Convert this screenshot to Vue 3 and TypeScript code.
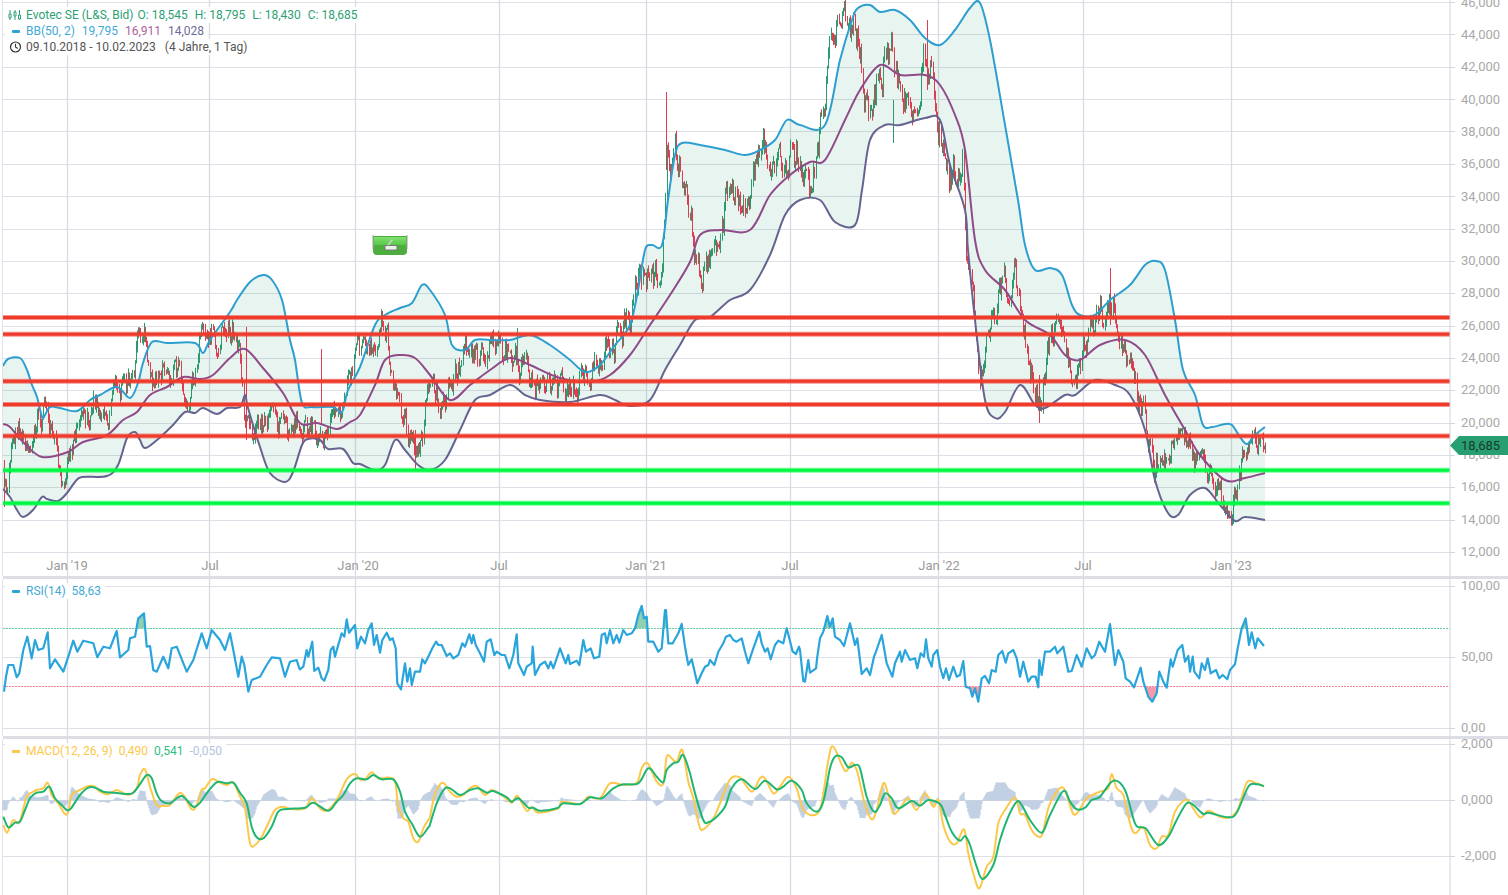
<template>
  <div class="chart">
    <section class="pane pane-price">
      <svg class="plot" viewBox="0 0 1508 576" width="1508" height="576">
        <defs>
          <clipPath id="price-clip"><rect x="3" y="0" width="1447" height="576" /></clipPath>
          <linearGradient id="btn-top" x1="0" y1="0" x2="0" y2="1">
            <stop offset="0" stop-color="#7fe06c" />
            <stop offset="1" stop-color="#58c94a" />
          </linearGradient>
        </defs>
        <g class="grid">
          <line v-for="y in priceGrid" :key="y" x1="3" x2="1450" :y1="y" :y2="y" />
        </g>
        <g class="grid-v">
          <line v-for="x in monthX" :key="x" :x1="x" :x2="x" y1="0" y2="576" />
        </g>
        <line class="edge" x1="2.5" x2="2.5" y1="0" y2="576" />
        <path class="band" :d="bandPath" />
        <g clip-path="url(#price-clip)">
          <path class="candle-up" :d="candles.up" />
          <path class="candle-down" :d="candles.down" />
          <path class="bb-mid" :d="midPath" />
          <path class="bb-low" :d="lowerPath" />
          <path class="bb-up" :d="upperPath" />
        </g>
        <g v-for="y in redLevels" :key="y">
          <line class="lvl-red-soft" x1="3" x2="1450" :y1="y" :y2="y" />
          <line class="lvl-red" x1="3" x2="1450" :y1="y" :y2="y" />
        </g>
        <g v-for="y in greenLevels" :key="y">
          <line class="lvl-green-soft" x1="3" x2="1450" :y1="y" :y2="y" />
          <line class="lvl-green" x1="3" x2="1450" :y1="y" :y2="y" />
        </g>
        <!-- Handelsmarke -->
        <g>
          <path d="M373 236h34v15q0 4-4 4h-26q-4 0-4-4z" fill="#4dae3f" />
          <path d="M374 237h32v8h-32z" fill="url(#btn-top)" />
          <path d="M373 235v14M407 235v14" stroke="#9aa49a" stroke-width="1" />
          <rect x="385" y="245.5" width="12" height="4.5" fill="#eef2ee" stroke="#777" stroke-width="1" />
          <path d="M388 245l4.500-5.500" stroke="#c9d2c9" stroke-width="1.600" />
        </g>
        <line class="axis" x1="1450" x2="1450" y1="0" y2="576" />
        <g v-for="t in priceTicks" :key="t.label">
          <line class="axis" x1="1450" x2="1455" :y1="t.y + 0.5" :y2="t.y + 0.5" />
          <text class="axis-label" x="1461" :y="t.labelY + 4.500">{{ t.label }}</text>
        </g>
        <text v-for="t in monthTicks" :key="t.x" class="month" :x="t.x" y="569.500" text-anchor="middle">{{ t.label }}</text>
      </svg>

      <div class="legend legend-price">
        <div class="row up">
          <svg class="ico" width="21" height="16" viewBox="0 0 21 16">
            <path d="M5 3v10M10 3v10M14.500 3v10" stroke="#2d9f74" stroke-width="1" fill="none" />
            <path d="M4 7h2v4h-2zM9 5h2v4h-2zM13.500 8h2v4h-2z" fill="#fff" stroke="#2d9f74" stroke-width="1" />
          </svg>
          <span class="name">Evotec SE (L&amp;S, Bid)</span><span>O: 18,545</span><span>H: 18,795</span><span>L: 18,430</span><span>C: 18,685</span>
        </div>
        <div class="row row-bb">
          <i class="dash dash-bb"></i>
          <span class="bb">BB(50, 2)</span><span class="bb">19,795</span><span class="bb-m">16,911</span><span class="bb-l">14,028</span>
        </div>
        <div class="row muted">
          <svg class="ico" width="21" height="16" viewBox="0 0 21 16">
            <circle cx="10.500" cy="8" r="5" fill="none" stroke="#333" stroke-width="1.200" />
            <path d="M10.500 4.800V8l2.200 1.500" fill="none" stroke="#333" stroke-width="1.100" />
          </svg>
          <span>09.10.2018 - 10.02.2023</span><span class="range">(4 Jahre, 1 Tag)</span>
        </div>
      </div>

      <div class="last-price">18,685</div>
    </section>

    <div class="sep"></div>

    <section class="pane pane-rsi">
      <svg class="plot" viewBox="0 579 1508 157" width="1508" height="157">
        <defs>
          <clipPath id="rsi-over"><rect x="0" y="579" width="1450" height="49.500" /></clipPath>
          <clipPath id="rsi-under"><rect x="0" y="686.500" width="1450" height="50" /></clipPath>
        </defs>
        <g class="grid">
          <line v-for="t in rsiTicks" :key="t.y" x1="3" x2="1450" :y1="t.y" :y2="t.y" />
        </g>
        <g class="grid-v">
          <line v-for="x in monthX" :key="x" :x1="x" :x2="x" y1="579" y2="736" />
        </g>
        <line class="edge" x1="2.500" x2="2.500" y1="579" y2="736" />
        <path class="rsi-fill-up" :d="rsiHigh" clip-path="url(#rsi-over)" />
        <path class="rsi-fill-down" :d="rsiLow" clip-path="url(#rsi-under)" />
        <line class="dots-green" x1="3" x2="1450" y1="628.500" y2="628.500" />
        <line class="dots-red" x1="3" x2="1450" y1="686.500" y2="686.500" />
        <path class="rsi" :d="rsiPath" />
        <line class="axis" x1="1450" x2="1450" y1="579" y2="736" />
        <g v-for="t in rsiTicks" :key="t.label">
          <line class="axis" x1="1450" x2="1455" :y1="t.y" :y2="t.y" />
          <text class="axis-label" x="1461" :y="t.y + 3.500">{{ t.label }}</text>
        </g>
      </svg>
      <div class="legend legend-low">
        <div class="row">
          <i class="dash dash-rsi"></i>
          <span class="bb">RSI(14)</span><span class="bb">58,63</span>
        </div>
      </div>
    </section>

    <div class="sep"></div>

    <section class="pane pane-macd">
      <svg class="plot" viewBox="0 739 1508 156" width="1508" height="156">
        <g class="grid">
          <line v-for="t in macdTicks" :key="t.y" x1="3" x2="1450" :y1="t.y" :y2="t.y" />
        </g>
        <g class="grid-v">
          <line v-for="x in monthX" :key="x" :x1="x" :x2="x" y1="739" y2="895" />
        </g>
        <line class="edge" x1="2.500" x2="2.500" y1="739" y2="895" />
        <path class="hist" :d="histPath" />
        <path class="macd-y" :d="macdPath" />
        <path class="macd-g" :d="signalPath" />
        <line class="axis" x1="1450" x2="1450" y1="739" y2="895" />
        <g v-for="t in macdTicks" :key="t.label">
          <line class="axis" x1="1450" x2="1455" :y1="t.y" :y2="t.y" />
          <text class="axis-label" x="1461" :y="t.y + 3.500">{{ t.label }}</text>
        </g>
      </svg>
      <div class="legend legend-low">
        <div class="row">
          <i class="dash dash-macd"></i>
          <span class="m-y">MACD(12, 26, 9)</span><span class="m-y">0,490</span><span class="m-g">0,541</span><span class="m-h">-0,050</span>
        </div>
      </div>
    </section>
  </div>
</template>

<script setup lang="ts">
type Pt = [number, number]

// Kurse in Pixeln, von Hand aus dem Chart abgelesen (x, y, x, y, ...)
function pairs(flat: number[]): Pt[] {
  const out: Pt[] = []
  for (let i = 0; i < flat.length; i += 2) out.push([flat[i], flat[i + 1]])
  return out
}
// Abschnitte wurden in 3x-Vergrößerung gemessen
function seg(x0: number, y0: number, flat: number[]): Pt[] {
  return pairs(flat).map(([x, y]) => [x0 + x / 3, y0 + y / 3] as Pt)
}

function lineD(pts: Pt[]): string {
  return 'M' + pts.map((p) => p[0].toFixed(1) + ' ' + p[1].toFixed(1)).join('L')
}
function smoothD(pts: Pt[]): string {
  let d = 'M' + pts[0][0].toFixed(1) + ' ' + pts[0][1].toFixed(1)
  for (let i = 0; i < pts.length - 1; i++) {
    const a = pts[Math.max(i - 1, 0)]
    const b = pts[i]
    const c = pts[i + 1]
    const e = pts[Math.min(i + 2, pts.length - 1)]
    d += 'C' + (b[0] + (c[0] - a[0]) / 6).toFixed(1) + ' ' + (b[1] + (c[1] - a[1]) / 6).toFixed(1)
    d += ' ' + (c[0] - (e[0] - b[0]) / 6).toFixed(1) + ' ' + (c[1] - (e[1] - b[1]) / 6).toFixed(1)
    d += ' ' + c[0].toFixed(1) + ' ' + c[1].toFixed(1)
  }
  return d
}
function at(pts: Pt[], x: number): number {
  if (x <= pts[0][0]) return pts[0][1]
  for (let i = 1; i < pts.length; i++) {
    if (x <= pts[i][0]) {
      const t = (x - pts[i - 1][0]) / (pts[i][0] - pts[i - 1][0] || 1)
      return pts[i - 1][1] + (pts[i][1] - pts[i - 1][1]) * t
    }
  }
  return pts[pts.length - 1][1]
}

const monthX = [67.5, 209.5, 355.5, 499.5, 646.5, 790.5, 938.5, 1083.5, 1231.5]
const monthTicks = [
  { x: 67, label: "Jan '19" }, { x: 210, label: 'Jul' }, { x: 358, label: "Jan '20" },
  { x: 499, label: 'Jul' }, { x: 646, label: "Jan '21" }, { x: 790, label: 'Jul' },
  { x: 939, label: "Jan '22" }, { x: 1083, label: 'Jul' }, { x: 1231, label: "Jan '23" },
]

const priceTicks = Array.from({ length: 18 }, (_, i) => ({
  y: Math.round(552 - i * 32.35),
  labelY: 551.3 - i * 32.3,
  label: 12 + i * 2 + ',000',
}))
const priceGrid = priceTicks.map((t) => t.y + 0.5)
const redLevels = [317.5, 334.2, 381.3, 404.4, 436]
const greenLevels = [470.3, 503.3]

const rsiTicks = [
  { y: 586.5, label: '100,00' },
  { y: 657.5, label: '50,00' },
  { y: 728.5, label: '0,00' },
]
const macdTicks = [
  { y: 744.5, label: '2,000' },
  { y: 800.5, label: '0,000' },
  { y: 856.5, label: '-2,000' },
]

const upper = pairs([
  3,366, 8,359, 20,358, 27,370, 32,385, 37,397, 42,417, 45,415, 50,407, 60,408, 77,411, 90,400, 100,395,
  117,387, 130,398, 138,383, 143,363, 152,342, 167,343, 195,343, 203,353, 210,340, 230,312, 237,300, 250,282,
  263,275, 272,280, 282,300, 290,340, 295,360, 302,403, 312,407, 333,407, 342,412, 348,390, 360,367,
  375,325, 385,315, 400,308, 412,303, 422,285, 430,290, 445,315, 452,345, 465,350, 475,340, 490,340, 510,340,
  530,335, 550,345, 570,360, 585,372, 600,365, 615,345, 630,325, 638,290, 645,250, 652,245, 662,245, 668,200,
  675,155, 682,143, 700,145, 725,150, 745,155, 760,150, 775,140, 787,120, 800,125, 825,125, 840,60, 852,20,
  858,8, 870,5, 880,12, 895,10, 910,20, 925,38, 940,45, 955,30, 970,8, 980,3, 990,40, 1005,125, 1018,200,
  1025,245, 1035,270, 1050,268, 1062,275, 1072,305, 1080,315, 1095,315, 1110,300, 1130,285, 1145,265, 1156,261,
  1165,270, 1175,320, 1183,370, 1195,395, 1203,425, 1212,427, 1225,424, 1232,425, 1240,437, 1247,444, 1255,435, 1265,427,
])
const lower = pairs([
  3,489, 10,497, 17,510, 23,517, 33,510, 42,497, 47,499, 58,501, 67,493, 75,482, 82,477, 107,476, 118,465, 127,438,
  135,432, 140,440, 145,448, 157,440, 173,425, 185,412, 195,413, 203,408, 217,414, 227,408, 240,407, 245,395,
  248,408, 260,447, 270,473, 285,482, 293,472, 302,445, 308,439, 320,440, 328,449, 343,449, 353,463, 360,464,
  375,470, 385,465, 395,440, 405,450, 418,465, 430,470, 445,460, 460,430, 475,400, 490,395, 510,385, 525,395,
  540,400, 570,402, 600,395, 615,400, 630,406, 650,400, 665,370, 680,345, 695,320, 710,317, 730,300, 750,290,
  770,255, 785,215, 800,200, 820,200, 835,222, 855,225, 862,190, 870,140, 885,125, 900,125, 925,118, 940,120,
  950,165, 965,210, 968,250, 975,320, 985,400, 995,418, 1005,412, 1020,385, 1035,405, 1045,408, 1065,395,
  1075,395, 1095,380, 1115,385, 1130,395, 1145,430, 1155,480, 1168,513, 1178,515, 1190,495, 1205,488, 1220,505,
  1235,521, 1245,517, 1265,520,
])
const middle = pairs([
  3,424, 10,427, 23,442, 42,457, 68,452, 83,442, 107,435, 123,420, 137,412, 150,395, 167,387, 183,377, 200,379,
  213,375, 230,358, 245,349, 263,368, 283,393, 300,423, 317,423, 337,429, 350,422, 360,415,
  375,385, 385,360, 400,355, 415,358, 430,375, 450,400, 470,385, 490,370, 510,358, 530,365, 560,378, 590,382,
  610,375, 630,355, 650,325, 670,295, 690,262, 700,235, 720,230, 750,230, 770,195, 790,175, 810,162, 825,160,
  845,120, 860,90, 880,65, 900,75, 925,75, 940,85, 955,115, 965,150, 975,240, 985,270, 1005,290, 1025,320,
  1050,335, 1065,355, 1080,360, 1100,345, 1125,340, 1145,355, 1165,395, 1185,430, 1200,455, 1225,480, 1245,478, 1265,473,
])
const closes = pairs([
  3,480, 8,500, 12,460, 18,430, 24,440, 30,425, 38,415, 48,410, 52,440, 58,470, 65,480, 75,445, 85,415, 100,408,
  120,400, 130,385, 140,345, 145,335, 150,390, 160,375, 175,365, 180,385, 190,405, 200,350, 215,335, 230,318,
  240,340, 245,400, 250,440, 262,430, 275,405, 290,430, 305,415, 320,445, 335,430, 350,385, 365,345, 385,322,
  395,385, 405,420, 415,460, 430,395, 445,390, 470,350, 490,350, 510,360, 530,380, 560,390, 590,375, 610,345,
  630,320, 640,255, 650,275, 660,280, 668,145, 680,150, 690,220, 700,280, 715,245, 730,190, 745,215, 760,160,
  780,150, 800,160, 810,190, 830,55, 850,15, 862,60, 870,110, 885,50, 900,80, 915,100, 925,50, 935,110, 950,180,
  963,150, 968,270, 980,370, 1000,290, 1015,285, 1025,345, 1040,410, 1050,340, 1060,320, 1075,380, 1090,330,
  1105,320, 1115,305, 1130,375, 1145,420, 1155,465, 1175,440, 1185,430, 1200,470, 1220,495, 1232,500, 1245,450,
  1255,440, 1265,445,
])

// einzelne lange Dochte
const spikes: { x: number; top: number; bottom: number; up: boolean }[] = [
  { x: 666, top: 92, bottom: 170, up: false },
  { x: 321, top: 349, bottom: 425, up: false },
  { x: 246, top: 327, bottom: 440, up: false },
  { x: 1110, top: 268, bottom: 325, up: false },
  { x: 415, top: 430, bottom: 470, up: false },
  { x: 517, top: 328, bottom: 365, up: true },
  { x: 1039, top: 375, bottom: 423, up: false },
  { x: 893, top: 100, bottom: 143, up: true },
  { x: 927, top: 20, bottom: 90, up: false },
  { x: 4, top: 460, bottom: 507, up: false },
]

function buildCandles() {
  let seed = 20181009
  const rnd = () => {
    seed = (seed * 1664525 + 1013904223) >>> 0
    return seed / 4294967296
  }
  let up = ''
  let down = ''
  let noise = 0
  let prev = at(closes, 3)
  const step = (1265 - 4) / 1100
  for (let i = 0; i <= 1100; i++) {
    const x = Math.round(4 + i * step) + 0.5
    const base = at(closes, x)
    // höhere Kurse schwanken im Bild stärker
    const amp = 20 + ((552 - base) / 552) * 22
    noise = noise * 0.7 + (rnd() - 0.5) * amp
    const c = base + noise
    const hi = Math.min(prev, c) - rnd() * 6
    const lo = Math.max(prev, c) + rnd() * 6
    const part = `M${x} ${hi.toFixed(1)}V${lo.toFixed(1)}`
    if (c <= prev) up += part
    else down += part
    prev = c
  }
  for (const s of spikes) {
    const d = `M${s.x + 0.5} ${s.top}V${s.bottom}`
    if (s.up) up += d
    else down += d
  }
  return { up, down }
}
const candles = buildCandles()

const upperPath = smoothD(upper)
const lowerPath = smoothD(lower)
const midPath = smoothD(middle)
const bandPath = smoothD(upper) + 'L' + smoothD([...lower].reverse()).slice(1) + 'Z'

const rsi: Pt[] = [
  ...seg(0, 570, [
    12,365, 18,320, 25,285, 40,285, 50,322, 58,310, 70,240, 82,200, 95,265, 105,210, 115,240, 130,235, 143,187,
    150,295, 165,268, 190,305, 205,260, 220,212, 232,245, 250,212, 280,220, 292,262, 310,230, 330,235, 350,183,
    360,262, 385,240, 390,205, 405,200, 415,145, 432,130, 440,230, 450,228, 460,300, 470,305, 490,260, 505,295,
    515,235, 530,230, 560,305, 580,270, 605,190, 620,235, 635,180, 660,210, 675,240, 690,190, 700,240, 715,320,
    725,260, 733,285, 745,365, 755,330, 780,320, 800,285, 815,262, 840,265, 855,320, 870,275, 890,270, 898,295,
  ]),
  ...seg(300, 600, [
    0,208, 10,200, 20,150, 25,170, 37,125, 43,213, 55,203, 65,235, 73,242, 85,210, 92,150, 100,140, 105,170, 112,145,
    125,100, 133,110, 140,58, 147,98, 165,75, 172,145, 183,110, 195,130, 205,90, 215,70, 222,135, 230,105, 240,158,
    247,120, 260,98, 270,120, 278,115, 287,145, 292,250, 303,268, 315,190, 322,245, 330,205, 335,255, 345,215, 360,215,
    367,178, 375,190, 385,170, 397,145, 408,125, 415,135, 425,135, 440,168, 450,160, 460,175, 475,165, 487,130, 495,140,
    508,103, 515,130, 520,105, 527,135, 540,160, 552,185, 560,125, 572,118, 583,165, 590,155, 605,165, 615,165, 628,205,
    640,165, 650,103, 655,190, 672,225, 680,200, 695,190, 698,140, 705,225, 720,195, 735,185, 745,205, 752,185, 760,205,
    770,175, 780,145, 797,190, 805,165, 810,192, 830,182, 838,195, 850,120, 858,155, 872,145, 882,175, 898,170, 905,105,
    915,100, 920,130, 930,90, 940,130, 950,105, 958,128, 970,90, 980,105, 995,100, 1005,85, 1015,45, 1025,18, 1032,55,
    1040,50, 1045,125, 1060,125, 1075,155, 1085,145, 1095,30, 1098,30, 1105,130, 1118,130, 1135,100, 1145,72, 1155,140,
    1165,195, 1175,178, 1192,250, 1205,220, 1215,200, 1225,195, 1230,180, 1243,195, 1255,155, 1270,130, 1278,110, 1290,105,
    1300,120, 1310,125, 1325,115, 1335,155, 1345,190, 1360,145, 1378,95, 1385,130, 1395,155, 1403,145, 1412,178, 1425,135,
    1435,122, 1450,130, 1460,85, 1478,155, 1488,162, 1497,140,
  ]),
  ...seg(800, 600, [
    0,150, 10,243, 15,245, 25,180, 30,218, 48,205, 52,170, 60,115, 70,95, 82,48, 90,80, 98,55, 105,110, 120,120, 132,138,
    150,70, 165,135, 172,115, 185,222, 200,205, 210,225, 222,170, 228,155, 245,105, 260,190, 277,230, 285,190, 300,155,
    305,185, 315,150, 330,180, 345,175, 352,205, 362,160, 372,170, 378,118, 385,175, 395,200, 400,165, 412,150, 420,200,
    430,235, 438,205, 447,240, 460,200, 470,230, 480,225, 490,183, 497,260, 510,265, 517,290, 525,265, 535,305, 545,235,
    555,228, 567,250, 575,210, 587,215, 595,165, 607,153, 617,188, 625,160, 640,150, 650,175, 660,230, 670,185, 685,245,
    695,230, 707,230, 715,262, 718,180, 725,225, 735,155, 750,155, 765,140, 772,160, 790,140, 805,215, 815,213, 830,165,
    845,200, 860,145, 875,175, 885,165, 898,125, 915,155, 930,72, 945,195, 955,150, 970,185, 977,235, 990,245, 1002,262,
    1022,203, 1030,245, 1045,290, 1057,305, 1070,280, 1078,215, 1090,245, 1100,263, 1112,178, 1118,200, 1133,150, 1147,135,
    1155,185, 1165,168, 1170,215, 1178,170, 1183,215, 1198,235, 1205,190, 1215,210, 1223,175, 1232,220, 1248,210, 1258,235,
    1268,225, 1282,238, 1290,210, 1305,193, 1313,145, 1325,85, 1337,55, 1347,135, 1355,97, 1366,145, 1373,115, 1392,138,
  ]),
]
const rsiPath = lineD(rsi)
const rsiEnd = rsi[rsi.length - 1][0]
const rsiHigh = `${rsiPath}L${rsiEnd} 628.5L${rsi[0][0]} 628.5Z`
const rsiLow = `${rsiPath}L${rsiEnd} 686.5L${rsi[0][0]} 686.5Z`

const macd: Pt[] = [
  ...seg(0, 740, [
    10,255, 20,278, 30,260, 40,240, 55,250, 65,225, 80,170, 95,158, 110,150, 130,145, 143,128, 155,165, 175,190, 195,222,
    205,215, 215,165, 240,150, 265,138, 285,140, 300,155, 325,163, 350,150, 385,165, 410,145, 420,105, 435,88, 450,140,
    470,195, 490,197, 510,195, 535,162, 550,165, 575,208, 590,195, 605,150, 615,145, 635,118, 655,125, 680,135, 700,128,
    720,170, 735,205, 750,310, 765,315, 785,290, 805,250, 825,210, 850,200, 870,207, 915,205, 935,175, 960,205, 980,212,
    1010,180, 1040,118, 1065,102, 1080,118, 1095,118, 1115,97, 1135,115, 1165,113, 1185,125, 1195,200, 1210,235, 1225,245,
    1240,295, 1255,305, 1270,265, 1285,240,
  ]),
  ...seg(430, 740, [
    0,230, 15,160, 30,133, 42,130, 60,155, 80,170, 100,165, 120,145, 140,138, 165,165, 185,150, 215,165, 245,188, 262,168,
    290,212, 305,200, 325,218, 385,205, 395,185, 450,192, 475,170, 510,175, 540,130, 580,135, 620,128, 635,85, 653,70,
    680,125, 700,130, 710,50, 725,55, 740,65, 757,30, 775,125, 790,175, 808,258, 820,268, 850,235, 870,190, 900,118, 930,113,
    965,155, 990,115, 1005,115, 1030,160, 1050,140, 1075,110, 1100,145, 1120,210, 1155,225, 1175,190, 1195,60, 1210,20,
    1245,92, 1265,68, 1280,90,
  ]),
  ...seg(860, 740, [
    0,130, 15,195, 35,238, 50,210, 70,130, 85,165, 100,220, 120,205, 145,175, 170,210, 195,160, 220,200, 235,180, 250,255,
    270,305, 290,310, 312,268, 325,340, 340,400, 358,445, 380,380, 400,350, 415,250, 435,210, 465,172, 480,220, 495,225,
    515,270, 535,290, 548,280, 565,205, 590,155, 610,143, 625,180, 640,222, 655,215, 680,175, 720,155, 745,145, 755,102,
    770,145, 790,165, 810,250, 825,280, 850,262, 870,315, 890,325, 905,290, 925,285, 945,215, 975,180, 990,190, 1020,232,
    1045,212, 1080,230, 1110,232, 1135,205, 1160,128, 1185,128, 1212,140,
  ]),
]
const signal: Pt[] = [
  ...seg(0, 740, [
    10,230, 25,262, 45,248, 60,245, 75,210, 90,175, 110,158, 130,155, 148,140, 165,175, 185,195, 200,210, 213,205, 240,165,
    265,143, 285,143, 310,155, 345,158, 375,162, 400,158, 425,125, 440,105, 455,115, 470,160, 485,183, 510,190, 545,168,
    580,200, 600,188, 620,160, 650,127, 680,130, 700,128, 720,158, 740,190, 755,260, 770,292, 790,295, 815,260, 835,215,
    860,207, 915,203, 940,188, 985,212, 1010,185, 1030,165, 1050,130, 1070,115, 1100,118, 1120,105, 1145,118, 1180,118,
    1200,155, 1215,215, 1235,250, 1260,290, 1285,262,
  ]),
  ...seg(430, 740, [
    0,253, 20,190, 45,145, 65,148, 90,165, 120,150, 145,145, 170,158, 190,153, 230,172, 245,185, 265,175, 295,203, 310,203,
    330,212, 380,205, 400,190, 450,192, 480,172, 515,175, 550,145, 580,133, 625,130, 655,85, 680,110, 700,127, 710,90,
    730,70, 745,65, 760,45, 780,100, 795,160, 820,240, 835,247, 860,230, 885,200, 905,145, 935,118, 975,147, 1005,122,
    1040,148, 1060,140, 1085,122, 1115,150, 1130,190, 1160,215, 1180,185, 1200,85, 1215,50, 1235,52, 1255,82, 1275,75,
  ]),
  ...seg(860, 740, [
    0,85, 20,170, 42,215, 60,195, 75,160, 95,175, 115,205, 155,183, 180,197, 205,180, 240,192, 255,225, 275,275, 300,302,
    315,288, 330,315, 350,380, 368,417, 400,375, 420,300, 445,230, 470,185, 485,195, 510,240, 545,278, 570,225, 610,153,
    630,185, 650,208, 675,203, 695,180, 720,170, 760,122, 795,150, 825,250, 845,262, 860,268, 895,315, 925,290, 950,240,
    980,190, 1000,195, 1030,222, 1045,218, 1105,232, 1130,218, 1165,140, 1190,133, 1212,138,
  ]),
]
const macdPath = smoothD(macd)
const signalPath = smoothD(signal)

function buildHist(): string {
  let d = ''
  for (let x = 3; x < 1265; x += 1) {
    const h = Math.max(-18, Math.min(18, (at(signal, x) - at(macd, x)) * 1.15))
    if (Math.abs(h) < 0.4) continue
    d += `M${x} 800.5v${(-h).toFixed(1)}`
  }
  return d
}
const histPath = buildHist()
</script>

<style scoped>
.chart {
  width: 1508px;
  height: 895px;
  background: #fff;
  font-family: Roboto, "Liberation Sans", sans-serif;
  display: flex;
  flex-direction: column;
  overflow: hidden;
}
.pane { position: relative; flex: none; }
.pane-price { height: 576px; }
.pane-rsi { height: 157px; }
.pane-macd { height: 156px; }
.plot { display: block; overflow: visible; }
.sep { height: 3px; flex: none; margin-left: 3px; background: #dcdde5; }

.grid line { stroke: #dedfe7; stroke-width: 1; }
.grid-v line { stroke: #d9dae3; stroke-width: 1.3; }
.edge { stroke: #e3e4ea; stroke-width: 1; }
.axis { stroke: #d3d4de; stroke-width: 1; }
.axis-label { font-size: 13px; fill: #a9a9a9; font-family: Roboto, sans-serif; }
.month { font-size: 13px; fill: #9a9a9a; font-family: Roboto, sans-serif; }

.band { fill: #2a9d6f; fill-opacity: 0.11; stroke: none; }
.candle-up { stroke: #2b9a6c; stroke-width: 1; fill: none; }
.candle-down { stroke: #de3c4f; stroke-width: 1; fill: none; }
.bb-up { fill: none; stroke: #2c9fd0; stroke-width: 2; stroke-linejoin: round; }
.bb-mid { fill: none; stroke: #8f4a88; stroke-width: 2; stroke-linejoin: round; }
.bb-low { fill: none; stroke: #666390; stroke-width: 2; stroke-linejoin: round; }

.lvl-red-soft { stroke: #ee3b2c; stroke-width: 5; stroke-opacity: 0.55; }
.lvl-red { stroke: #ee3b2c; stroke-width: 3; }
.lvl-green-soft { stroke: #00ff44; stroke-width: 5; stroke-opacity: 0.55; }
.lvl-green { stroke: #00f744; stroke-width: 3; }

.rsi { fill: none; stroke: #2aa5dc; stroke-width: 2.2; stroke-linejoin: round; }
.rsi-fill-up { fill: #8fd0b0; }
.rsi-fill-down { fill: #f99aa8; }
.dots-green { stroke: #6cc9a5; stroke-width: 1; stroke-dasharray: 2 1; }
.dots-red { stroke: #f5859a; stroke-width: 1; stroke-dasharray: 2 1; }

.hist { fill: none; stroke: #adc0da; stroke-width: 1; }
.macd-y { fill: none; stroke: #fcc84a; stroke-width: 2; stroke-linejoin: round; }
.macd-g { fill: none; stroke: #1fb573; stroke-width: 2; stroke-linejoin: round; }

.legend { position: absolute; left: 5px; font-size: 12px; line-height: 16px; }
.legend-price { top: 7px; }
.legend-low { top: 4px; }
.row { display: flex; align-items: center; width: fit-content; height: 16px; background: #fff; white-space: nowrap; padding-right: 4px; }
.row span { margin-right: 6px; }
.row span:last-child { margin-right: 0; }
.up span { margin-right: 7px; }
.up .name { margin-right: 4px; }
.row-bb span { margin-right: 7px; }
.ico { flex: none; display: block; }
.up { color: #2d9f74; }
.muted { color: #555; }
.muted .range { margin-left: 3px; }
.dash { flex: none; display: block; width: 8px; height: 3px; margin: 0 6px 0 7px; border-radius: 1px; }
.dash-bb, .dash-rsi { background: #2aa3d6; }
.dash-macd { background: #fcc84a; }
.bb { color: #3fa9d8; }
.bb-m { color: #ab5f9c; }
.bb-l { color: #6d6c98; }
.m-y { color: #fcc84a; }
.m-g { color: #2fbe82; }
.m-h { color: #b3c3dc; }

.last-price {
  position: absolute;
  left: 1450px;
  top: 436px;
  width: 58px;
  height: 19px;
  padding-left: 11px;
  box-sizing: border-box;
  background: #279f71;
  clip-path: polygon(0 50%, 9px 0, 100% 0, 100% 100%, 9px 100%);
  color: #1b3a2d;
  font-size: 13px;
  line-height: 19px;
}
</style>

<style>
body { margin: 0; background: #fff; overflow: hidden; }
</style>
